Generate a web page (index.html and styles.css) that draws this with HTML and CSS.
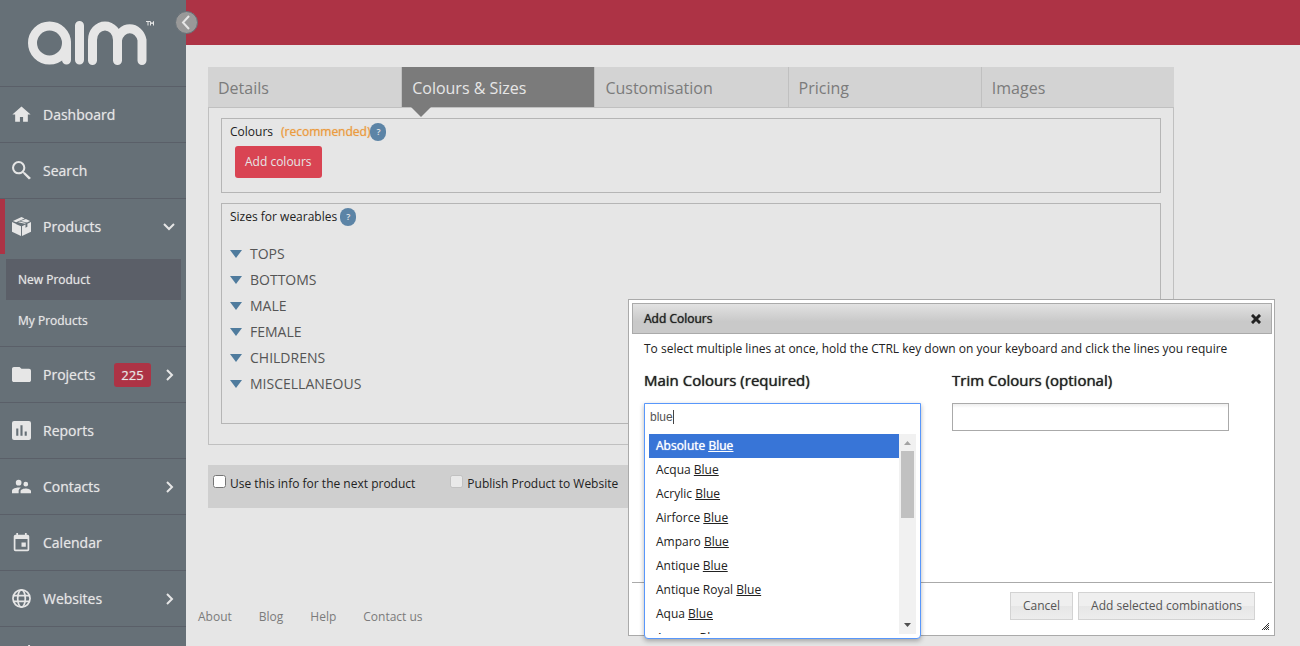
FILE: index.html
```html
<!DOCTYPE html>
<html lang="en">
<head>
<meta charset="utf-8">
<title>Aim - New Product</title>
<link rel="stylesheet" href="styles.css">
</head>
<body>
<div class="app">
  <aside class="sidebar">
    <a class="logo" href="#" aria-label="Aim home">
      <svg width="130" height="48" viewBox="0 0 130 48" fill="none" stroke="#e6e6e6" stroke-width="9" stroke-linecap="round">
        <circle cx="21.500" cy="23" r="17"/>
        <path d="M38.500 23V40M51.500 5.500V40M64.500 40.500V20a12.500 14 0 0 1 25 0V40.500M89.500 20a12.500 14 0 0 1 24.500 0V40.500"/>
        <path d="M118 1.500h4M120 1.500v4M122.500 5.500v-4l1.500 2.500l1.500-2.500v4" stroke-width="1" stroke-linecap="butt"/>
      </svg>
    </a>
    <nav class="nav" aria-label="Main">
      <a class="nav-item" href="#"><svg class="icon" viewBox="0 0 24 24"><path d="M10 21v-6h4v6h6v-9h3.500L12 2 .5 12H4v9z"/></svg><span>Dashboard</span></a>
      <a class="nav-item" href="#"><svg class="icon" viewBox="3 3 18.500 18.500"><path d="M15.500 14h-.79l-.28-.27A6.470 6.470 0 0 0 16 9.500 6.500 6.500 0 1 0 9.500 16c1.610 0 3.090-.59 4.230-1.570l.27.28v.79l5.500 5.500L21.500 19.500zm-6 0a4.500 4.500 0 1 1 0-9 4.500 4.500 0 0 1 0 9z"/></svg><span>Search</span></a>
      <div class="nav-group">
        <a class="nav-item nav-item-active" href="#"><svg class="icon" viewBox="0 0 20 20"><path d="M10 0l3.300 1.600-8.900 4L1 4.100zM14.600 2.200L19 4.200l-3.200 1.500-7-1.500zM7.900 4.800l7 1.500-1.500.7-7-1.500zM0 5.300l4.500 2.100v.100L9.500 9.700V20L0 15.500zM20 5.300v10.200L10.500 20V9.700l3.700-1.700v3.200l2-1V7.100z"/></svg><span>Products</span><svg class="chevron" viewBox="0 0 12 12"><path d="M1 3l5 5 5-5"/></svg></a>
        <div class="subnav">
          <a class="subnav-item subnav-item-active" href="#">New Product</a>
          <a class="subnav-item" href="#">My Products</a>
        </div>
      </div>
      <a class="nav-item" href="#"><svg class="icon" viewBox="2 2 20 20"><path d="M10 4H4c-1.100 0-2 .9-2 2v12c0 1.100.9 2 2 2h16c1.100 0 2-.9 2-2V8c0-1.100-.9-2-2-2h-8z"/></svg><span>Projects</span><span class="count">225</span><svg class="chevron" viewBox="0 0 12 12"><path d="M4 1l5 5-5 5"/></svg></a>
      <a class="nav-item" href="#"><svg class="icon" viewBox="3 3 18 18"><path d="M19 3H5a2 2 0 0 0-2 2v14a2 2 0 0 0 2 2h14a2 2 0 0 0 2-2V5a2 2 0 0 0-2-2zM9 17H7v-7h2zm4 0h-2V7h2zm4 0h-2v-4h2z"/></svg><span>Reports</span></a>
      <a class="nav-item" href="#"><svg class="icon" viewBox="2 2 20 20"><path d="M16.500 12a2.500 2.500 0 1 0 0-5 2.500 2.500 0 0 0 0 5zM9 11a3 3 0 1 0 0-6 3 3 0 0 0 0 6zm7.500 3c-1.830 0-5.500.92-5.500 2.750V19h11v-2.250c0-1.830-3.670-2.750-5.500-2.750zM9 13c-2.330 0-7 1.170-7 3.500V19h7v-2.250c0-.85.330-2.340 2.370-3.470C10.500 13.100 9.660 13 9 13z"/></svg><span>Contacts</span><svg class="chevron" viewBox="0 0 12 12"><path d="M4 1l5 5-5 5"/></svg></a>
      <a class="nav-item" href="#"><svg class="icon" viewBox="2 1 20 22"><path d="M17 12h-5v5h5zM16 1v2H8V1H6v2H5a2 2 0 0 0-2 2v15a2 2 0 0 0 2 2h14a2 2 0 0 0 2-2V5a2 2 0 0 0-2-2h-1V1zm3 19H5V8h14z"/></svg><span>Calendar</span></a>
      <a class="nav-item" href="#"><svg class="icon" viewBox="0 0 20 20"><g fill="none" stroke="#e6e6e6" stroke-width="1.800"><circle cx="10" cy="10" r="9"/><ellipse cx="10" cy="10" rx="4" ry="9"/><path d="M1.500 7h17M1.500 13h17"/></g></svg><span>Websites</span><svg class="chevron" viewBox="0 0 12 12"><path d="M4 1l5 5-5 5"/></svg></a>
      <a class="nav-item" href="#" aria-label="Settings"><svg class="icon" viewBox="0 0 20 20"><path d="M17 0h2v3h1v4H3V3h14z"/></svg></a>
    </nav>
    <button class="collapse" type="button" aria-label="Collapse menu"><svg width="21" height="21" viewBox="0 0 21 21"><path d="M13 4L7 10.500 13 17" fill="none" stroke="#e6e6e6" stroke-width="2"/></svg></button>
  </aside>

  <div class="page">
    <header class="topbar"></header>
    <main class="content">
      <nav class="tabs" aria-label="Product sections">
        <a class="tab" href="#">Details</a>
        <a class="tab tab-active" href="#">Colours &amp; Sizes</a>
        <a class="tab" href="#">Customisation</a>
        <a class="tab" href="#">Pricing</a>
        <a class="tab" href="#">Images</a>
      </nav>
      <div class="panel">
        <section class="box box-colours">
          <div class="box-title"><span>Colours</span><span class="recommended">(recommended)</span><button class="help" type="button">?</button></div>
          <button class="add-button" type="button">Add colours</button>
        </section>
        <section class="box box-sizes">
          <div class="box-title"><span>Sizes for wearables</span><button class="help" type="button">?</button></div>
          <ul class="sizes">
            <li>TOPS</li>
            <li>BOTTOMS</li>
            <li>MALE</li>
            <li>FEMALE</li>
            <li>CHILDRENS</li>
            <li>MISCELLANEOUS</li>
          </ul>
        </section>
      </div>
      <div class="actions">
        <label class="check"><input type="checkbox">Use this info for the next product</label>
        <label class="check"><input type="checkbox" disabled>Publish Product to Website</label>
      </div>
    </main>
    <footer class="footer">
      <a href="#">About</a>
      <a href="#">Blog</a>
      <a href="#">Help</a>
      <a href="#">Contact us</a>
    </footer>
  </div>
</div>

<div class="dialog" role="dialog" aria-labelledby="dialog-title">
  <div class="dialog-bar">
    <span id="dialog-title">Add Colours</span>
    <button class="close" type="button" aria-label="Close"><svg width="10" height="10" viewBox="0 0 10 10"><path d="M2 2l6 6M8 2l-6 6" stroke="#222" stroke-width="3" stroke-linecap="square"/></svg></button>
  </div>
  <div class="dialog-body">
    <p class="hint">To select multiple lines at once, hold the CTRL key down on your keyboard and click the lines you require</p>
    <div class="fields">
      <div class="field">
        <label for="main-colours">Main Colours (required)</label>
        <div class="combo">
          <div class="combo-open">
            <input id="main-colours" class="combo-input" type="text" value="blue">
            <div class="combo-list">
              <ul class="options" role="listbox" aria-label="Main colours">
                <li class="option option-active" role="option">Absolute <em>Blue</em></li>
                <li class="option" role="option">Acqua <em>Blue</em></li>
                <li class="option" role="option">Acrylic <em>Blue</em></li>
                <li class="option" role="option">Airforce <em>Blue</em></li>
                <li class="option" role="option">Amparo <em>Blue</em></li>
                <li class="option" role="option">Antique <em>Blue</em></li>
                <li class="option" role="option">Antique Royal <em>Blue</em></li>
                <li class="option" role="option">Aqua <em>Blue</em></li>
                <li class="option" role="option">Ascona <em>Blue</em></li>
              </ul>
              <div class="scrollbar">
                <svg width="17" height="17" viewBox="0 0 17 17"><path d="M5 11h7L8.500 7z" fill="#a3a3a3"/></svg>
                <div class="thumb"></div>
                <svg width="17" height="17" viewBox="0 0 17 17"><path d="M5 6h7L8.500 10z" fill="#505050"/></svg>
              </div>
            </div>
          </div>
        </div>
      </div>
      <div class="field">
        <label for="trim-colours">Trim Colours (optional)</label>
        <input id="trim-colours" class="text-input" type="text">
      </div>
    </div>
  </div>
  <div class="dialog-actions">
    <button class="plain-button" type="button">Cancel</button>
    <button class="plain-button" type="button">Add selected combinations</button>
  </div>
  <svg class="grip" width="9" height="9" viewBox="0 0 9 9"><path d="M1 8l7-7M3 8l5-5M5 8l3-3M7 8l1-1" stroke="#333" stroke-width="1"/></svg>
</div>
</body>
</html>
```

FILE: styles.css
```css
* { box-sizing: border-box; }

body {
  margin: 0;
  background: #e6e6e6;
  color: #222;
  font: 12px/18px "Open Sans", sans-serif;
}

a { color: inherit; text-decoration: none; }
button, input { font: inherit; }
button { cursor: pointer; }
ul { margin: 0; padding: 0; list-style: none; }

.app { display: flex; height: 100vh; overflow: hidden; }

/* Sidebar */
.sidebar {
  position: relative;
  flex: 0 0 186px;
  min-width: 0;
  background: #667077;
  color: #e6e6e6;
}
.logo { display: flex; height: 86px; padding: 20px 0 0 28px; }
.nav { font-size: 14px; text-shadow: 0 0 1px rgba(230, 230, 230, .6); }
.nav-item {
  display: flex;
  align-items: center;
  gap: 12px;
  height: 56px;
  padding: 0 11px 0 12px;
  border-top: 1px solid #5a5f68;
}
.nav-item-active { padding-left: 7px; border-left: 5px solid #ad3345; border-top: 0; height: 55px; }
.nav-group { border-top: 1px solid #5a5f68; }
.icon { width: 19px; height: 19px; fill: #e6e6e6; flex: none; }
.chevron {
  flex: none;
  width: 12px;
  height: 12px;
  margin-left: auto;
  fill: none;
  stroke: #e6e6e6;
  stroke-width: 2;
}
.count {
  margin-left: 7px;
  padding: 3px 7px;
  border-radius: 3px;
  background: #ad3345;
  font-size: 13px;
}
.subnav { padding: 5px 5px 5px 6px; font-size: 12px; }
.subnav-item { display: flex; align-items: center; height: 41px; padding: 0 12px; }
.subnav-item-active { background: #5b5f68; }
.collapse {
  position: absolute;
  top: 11px;
  right: -12px;
  width: 23px;
  height: 23px;
  padding: 0;
  border: 1px solid #667077;
  border-radius: 50%;
  background: #999;
  display: grid;
  place-items: center;
}

/* Page */
.page { flex: 1; min-width: 0; }
.topbar { height: 45px; background: #ad3345; }
.content { max-width: 1010px; padding: 22px 22px 0; }

.tabs { display: grid; grid-template-columns: repeat(5, 1fr); background: #d3d3d3; }
.tab {
  height: 40px;
  padding: 0 10px;
  border-left: 1px solid #c0c0c0;
  color: #7b7b7b;
  font-size: 16px;
  line-height: 42px;
}
.tab:first-child { padding-left: 9px; border-left-color: #d3d3d3; }
.tab-active { position: relative; background: #7b7b7b; color: #e6e6e6; }
.tab-active::after {
  content: "";
  position: absolute;
  top: 100%;
  left: 9px;
  border: 10px solid transparent;
  border-top-color: #7b7b7b;
  border-bottom: 0;
}

.panel {
  display: grid;
  gap: 10px;
  padding: 10px 12px 20px;
  border: 1px solid #c0c0c0;
}
.box { padding: 4px 8px; border: 1px solid #b5b5b5; }
.box-colours { min-height: 75px; }
.box-sizes { min-height: 221px; }
.box-title { display: flex; align-items: center; height: 18px; }
.recommended { margin-left: 8px; color: #eb9b40; text-shadow: 0 0 1px rgba(235, 155, 64, .7); }
.help {
  width: 16px;
  height: 18px;
  margin-left: 3px;
  padding: 0;
  border: 0;
  border-radius: 8px;
  background: #5c84a6;
  color: #e6e6e6;
  font-size: 9px;
  font-weight: 600;
  line-height: 18px;
}
.recommended + .help { margin-left: 0; }
.add-button {
  display: block;
  height: 32px;
  margin: 5px 0 0 5px;
  padding: 0 10px;
  border: 0;
  border-radius: 3px;
  background: #d94453;
  color: #e6e6e6;
}
.sizes { margin-top: 15px; color: #555; font-size: 14px; line-height: 26px; }
.sizes li { display: flex; align-items: center; gap: 8px; }
.sizes li::before {
  content: "";
  border: 6px solid transparent;
  border-top: 8px solid #4f7b9d;
  border-bottom: 0;
}

.actions { display: flex; gap: 35px; min-height: 43px; margin-top: 20px; padding: 9px 5px; background: #cfcfcf; }
.check { display: flex; align-items: flex-start; gap: 4px; height: 20px; line-height: 20px; }
.check input { width: 13px; height: 13px; margin: 1px 0 0; }

.footer { display: flex; gap: 27px; padding: 100px 12px 0; color: #7b7b7b; }

/* Dialog */
.dialog {
  position: absolute;
  top: 299px;
  right: 25px;
  width: 647px;
  min-height: 337px;
  display: flex;
  flex-direction: column;
  padding: 3px 2px 3px 3px;
  border: 1px solid #aaa;
  background: #fff;
}
.dialog-bar {
  display: flex;
  align-items: center;
  justify-content: space-between;
  height: 31px;
  padding: 0 10px 0 11px;
  border: 1px solid #aaa;
  background: linear-gradient(#e2e2e2, #c9c9c9 60%);
  text-shadow: 0 0 1px #222;
}
.close { display: flex; padding: 0; border: 0; background: none; }
.dialog-body { flex: 1; padding: 6px 12px; }
.hint { margin: 0; }
.fields { display: grid; grid-template-columns: 277px 277px; gap: 31px; margin-top: 11px; }
.field { display: grid; gap: 12px; }
.field label { font-size: 15px; line-height: 22px; text-shadow: 0 0 1px #222; }
.text-input {
  width: 100%;
  height: 28px;
  border: 1px solid #aaa;
  background: linear-gradient(#eee, #fff 15%);
}
.combo { position: relative; height: 28px; }
.combo-open {
  position: absolute;
  top: 0;
  left: 0;
  right: 0;
  padding: 0 4px 4px;
  border: 1px solid #5897fb;
  border-radius: 0 0 4px 4px;
  background: #fff;
  box-shadow: 0 2px 5px rgba(0, 0, 0, .3);
}
.combo-input {
  display: block;
  width: 100%;
  height: 30px;
  padding: 0 1px 4px;
  border: 0;
  outline: 0;
  background: linear-gradient(#444, #444) 24px 6px / 1px 14px no-repeat;
  color: #555;
  font: 12px "Liberation Sans", Arial, sans-serif;
}
.combo-list { display: flex; height: 200px; }
.options { flex: 1; overflow: hidden; }
.option { height: 24px; padding: 0 7px; line-height: 24px; }
.option em { font-style: normal; text-decoration: underline; }
.option-active { background: #3875d7; color: #fff; text-shadow: 0 0 1px #fff; }
.scrollbar { display: flex; flex-direction: column; width: 17px; background: #f1f1f1; }
.thumb { height: 67px; margin: 0 2px auto; background: #c1c1c1; }

.dialog-actions {
  display: flex;
  justify-content: flex-end;
  gap: 5px;
  padding: 9px 17px 12px;
  border-top: 1px solid #aaa;
}
.plain-button {
  height: 28px;
  padding: 0 12px;
  border: 1px solid #d3d3d3;
  background: linear-gradient(#efefef 50%, #e6e6e6 50%, #ededed);
  color: #555;
}
.grip { position: absolute; right: 4px; bottom: 4px; }
```
